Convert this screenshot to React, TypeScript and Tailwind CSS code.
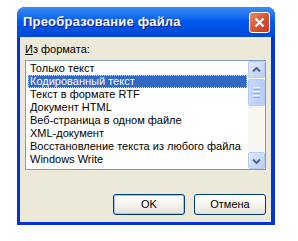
import React from "react";

const items = [
  "Только текст",
  "Кодированный текст",
  "Текст в формате RTF",
  "Документ HTML",
  "Веб-страница в одном файле",
  "XML-документ",
  "Восстановление текста из любого файла",
  "Windows Write",
];

const font = { fontFamily: '"Liberation Sans", Arial, sans-serif' };

function ScrollButton({ down }: { down?: boolean }) {
  return (
    <div className="w-[17px] h-[17px] rounded-[2px] border border-[#B7CAF5] bg-gradient-to-br from-[#E1EBFD] to-[#B9CDF9] flex items-center justify-center">
      <svg width="9" height="6" viewBox="0 0 9 6">
        <path
          d={down ? "M1 1.5 L4.5 5 L8 1.5" : "M1 4.5 L4.5 1 L8 4.5"}
          fill="none"
          stroke="#4D6185"
          strokeWidth="2"
        />
      </svg>
    </div>
  );
}

export default function App() {
  return (
    <div className="w-[298px] h-[241px] bg-white pt-[7px] pl-[17px]" style={font}>
      <div className="w-[258px] h-[218px] flex flex-col rounded-t-[8px] overflow-hidden bg-[#0831D9]">
        <div className="h-[30px] shrink-0 flex items-center justify-between pl-[6px] pr-[5px] bg-gradient-to-b from-[#3B8CF5] via-[#0058EE] to-[#0047D6]">
          <span
            className="text-white font-bold text-[13px] tracking-[0.2px]"
            style={{ textShadow: "1px 1px 0 #0A1F7A" }}
          >
            Преобразование файла
          </span>
          <div className="w-[21px] h-[21px] rounded-[3px] border border-white bg-gradient-to-br from-[#E88A6B] via-[#D9542F] to-[#C13D1A] flex items-center justify-center">
            <svg width="11" height="11" viewBox="0 0 11 11">
              <path d="M1.5 1.5 L9.5 9.5 M9.5 1.5 L1.5 9.5" stroke="white" strokeWidth="2.2" />
            </svg>
          </div>
        </div>
        <div className="flex-1 ml-[3px] mr-[4px] mb-[3px] bg-[#ECE9D8] flex flex-col px-[5px] pt-[6px] text-[11px] text-black">
          <div className="leading-[13px] h-[13px]">
            <span className="underline">И</span>з формата:
          </div>
          <div className="mt-[4px] w-[241px] h-[110px] border border-[#7F9DB9] bg-white flex">
            <div className="flex-1 flex flex-col pt-[1px] pl-[2px] pr-[1px]">
              {items.map((t, i) => (
                <div
                  key={t}
                  className={
                    "h-[13px] leading-[13px] pl-[2px] whitespace-nowrap " +
                    (i === 1 ? "bg-[#316AC5] text-white outline-1 outline-dotted outline-[#CEDDF7] -outline-offset-1" : "")
                  }
                >
                  {t}
                </div>
              ))}
            </div>
            <div className="w-[17px] bg-[#F7F6F0] flex flex-col">
              <ScrollButton />
              <div className="h-[27px] mt-[1px] rounded-[2px] border border-[#B7CAF5] bg-gradient-to-r from-[#C8D7FB] to-[#BACCF8] flex flex-col items-center justify-center gap-[1px]">
                <div className="w-[7px] h-[1px] bg-[#EEF4FE]" />
                <div className="w-[7px] h-[1px] bg-[#8CB0F8]" />
                <div className="w-[7px] h-[1px] bg-[#EEF4FE]" />
                <div className="w-[7px] h-[1px] bg-[#8CB0F8]" />
                <div className="w-[7px] h-[1px] bg-[#EEF4FE]" />
                <div className="w-[7px] h-[1px] bg-[#8CB0F8]" />
              </div>
              <div className="flex-1" />
              <ScrollButton down />
            </div>
          </div>
          <div className="flex-1" />
          <div className="flex justify-end gap-[9px] mb-[7px] mr-[0px]">
            <button className="w-[72px] h-[21px] rounded-[3px] border border-[#003C74] bg-gradient-to-b from-white via-[#F5F4EF] to-[#E3E1D6] shadow-[inset_0_0_0_1px_#A8C2EE] text-[11px]">
              OK
            </button>
            <button className="w-[72px] h-[21px] rounded-[3px] border border-[#003C74] bg-gradient-to-b from-white via-[#F5F4EF] to-[#E3E1D6] text-[11px]">
              Отмена
            </button>
          </div>
        </div>
      </div>
    </div>
  );
}
